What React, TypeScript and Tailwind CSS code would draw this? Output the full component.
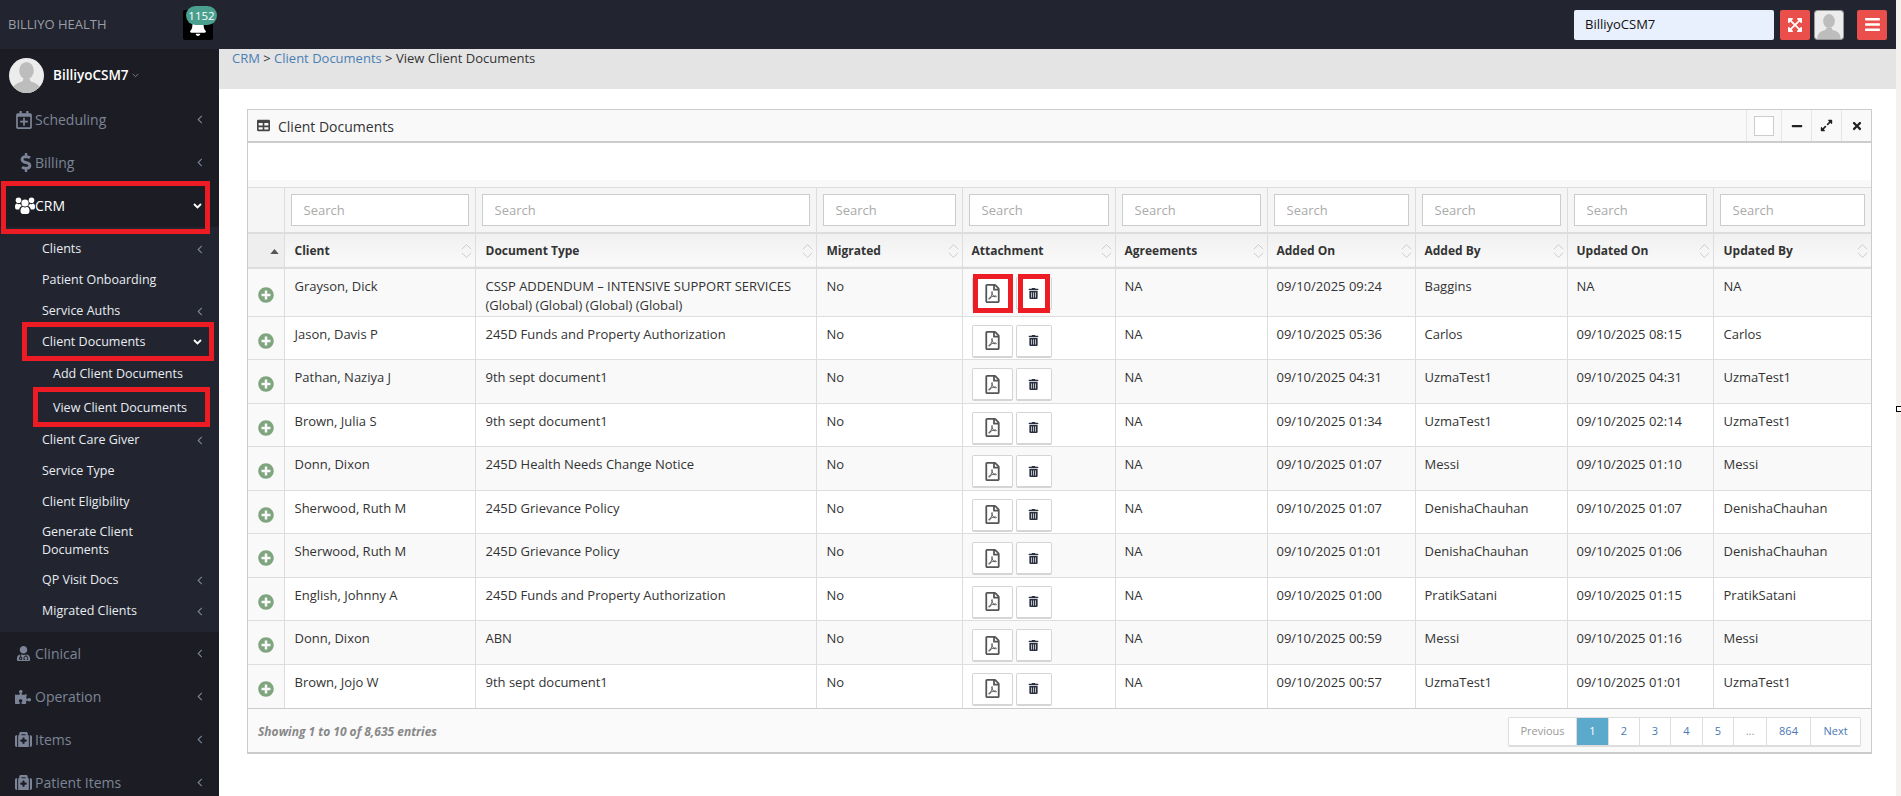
import type { ReactNode } from 'react';
import {
  FaBars, FaBell, FaDollarSign, FaExpandAlt, FaExpandArrowsAlt, FaMedkit, FaMinus,
  FaPlusCircle, FaPuzzlePiece, FaRegCalendarPlus, FaRegFilePdf, FaTable, FaTimes, FaTrashAlt, FaUserMd,
} from 'react-icons/fa';

const COLUMNS = [
  { label: 'Client', width: 'w-[191px]', pad: 'pl-[10px]' },
  { label: 'Document Type', width: 'w-[341px]', pad: 'pl-[10px]' },
  { label: 'Migrated', width: 'w-[146px]', pad: 'pl-[10px]' },
  { label: 'Attachment', width: 'w-[153px]', pad: 'pl-[9px]' },
  { label: 'Agreements', width: 'w-[152px]', pad: 'pl-[9px]' },
  { label: 'Added On', width: 'w-[148px]', pad: 'pl-[9px]' },
  { label: 'Added By', width: 'w-[152px]', pad: 'pl-[9px]' },
  { label: 'Updated On', width: 'w-[146px]', pad: 'pl-[9px]' },
  { label: 'Updated By', width: 'w-[158px]', pad: 'pl-[10px]' },
];

const ROWS = [
  ['Grayson, Dick', 'CSSP ADDENDUM – INTENSIVE SUPPORT SERVICES (Global) (Global) (Global) (Global)', '09/10/2025 09:24', 'Baggins', 'NA', 'NA'],
  ['Jason, Davis P', '245D Funds and Property Authorization', '09/10/2025 05:36', 'Carlos', '09/10/2025 08:15', 'Carlos'],
  ['Pathan, Naziya J', '9th sept document1', '09/10/2025 04:31', 'UzmaTest1', '09/10/2025 04:31', 'UzmaTest1'],
  ['Brown, Julia S', '9th sept document1', '09/10/2025 01:34', 'UzmaTest1', '09/10/2025 02:14', 'UzmaTest1'],
  ['Donn, Dixon', '245D Health Needs Change Notice', '09/10/2025 01:07', 'Messi', '09/10/2025 01:10', 'Messi'],
  ['Sherwood, Ruth M', '245D Grievance Policy', '09/10/2025 01:07', 'DenishaChauhan', '09/10/2025 01:07', 'DenishaChauhan'],
  ['Sherwood, Ruth M', '245D Grievance Policy', '09/10/2025 01:01', 'DenishaChauhan', '09/10/2025 01:06', 'DenishaChauhan'],
  ['English, Johnny A', '245D Funds and Property Authorization', '09/10/2025 01:00', 'PratikSatani', '09/10/2025 01:15', 'PratikSatani'],
  ['Donn, Dixon', 'ABN', '09/10/2025 00:59', 'Messi', '09/10/2025 01:16', 'Messi'],
  ['Brown, Jojo W', '9th sept document1', '09/10/2025 00:57', 'UzmaTest1', '09/10/2025 01:01', 'UzmaTest1'],
];

const PAGES = [
  { label: 'Previous', width: 'w-[68px]', tone: 'text-[#999]' },
  { label: '1', width: 'w-[32px]', tone: 'bg-[#5ba9cb] text-white' },
  { label: '2', width: 'w-[31px]', tone: 'text-[#4a77b4]' },
  { label: '3', width: 'w-[31px]', tone: 'text-[#4a77b4]' },
  { label: '4', width: 'w-[32px]', tone: 'text-[#4a77b4]' },
  { label: '5', width: 'w-[31px]', tone: 'text-[#4a77b4]' },
  { label: '...', width: 'w-[33px]', tone: 'text-[#999]' },
  { label: '864', width: 'w-[44px]', tone: 'text-[#4a77b4]' },
  { label: 'Next', width: 'w-[49px]', tone: 'text-[#4a77b4]' },
];

const CELL = 'pt-[8px] pb-[1.500px] align-top';

function RedBox({ className }: { className: string }) {
  return <div className={`absolute border-[5px] border-[#ed1c24] pointer-events-none ${className}`} />;
}

function Avatar({ className }: { className: string }) {
  return (
    <svg viewBox="0 0 36 36" className={className}>
      <rect width="36" height="36" fill="#ececec" />
      <ellipse cx="18" cy="13" rx="7.5" ry="9" fill="#bdbdbd" />
      <path d="M3 36c0-8 5-10 10-11.500 1-.5 1.500-2 1.500-3h7c0 1 .5 2.500 1.500 3 5 1.500 10 3.500 10 11.500z" fill="#bdbdbd" />
    </svg>
  );
}

function UsersIcon() {
  return (
    <svg viewBox="0 0 20 17" className="w-[20px] h-[17px]" fill="currentColor">
      <circle cx="3.500" cy="3.200" r="2.800" />
      <circle cx="16.500" cy="3.200" r="2.800" />
      <path d="M0 9.500c0-1.800 1-2.900 2-2.900 1 .8 2.100.8 3 .2.400 1 1.100 1.800 2 2.300-1.500.6-2.500 1.800-2.800 3.400H1.500C.5 12.500 0 11.500 0 9.500z" />
      <path d="M20 9.500c0-1.800-1-2.900-2-2.900-1 .8-2.100.8-3 .2-.4 1-1.100 1.800-2 2.300 1.500.6 2.500 1.800 2.800 3.400h2.700c1 0 1.500-1 1.500-3z" />
      <circle cx="10" cy="6" r="3.600" />
      <path d="M5.500 14c0-2.500 1-4 2.500-4.200.5.5 1.200.8 2 .8s1.500-.3 2-.8c1.500.2 2.500 1.700 2.500 4.200 0 1.800-1 3-2.500 3H8c-1.500 0-2.500-1.200-2.500-3z" />
    </svg>
  );
}

function ChevronLeft() {
  return (
    <svg viewBox="0 0 6 10" className="w-[6px] h-[9px] mr-[1px]" fill="none" stroke="#7c8597" strokeWidth="1.200">
      <path d="M5 1L1 5l4 4" />
    </svg>
  );
}

function ChevronDown() {
  return (
    <svg viewBox="0 0 9 6" className="w-[9px] h-[6px] mr-[2px]" fill="none" stroke="#ffffff" strokeWidth="1.800">
      <path d="M1 1l3.500 3.500L8 1" />
    </svg>
  );
}

function MainItem({ icon, label, active }: { icon: ReactNode; label: string; active?: boolean }) {
  return (
    <div className={`relative flex items-center h-[43px] pl-[15px] pr-[15px] ${active ? 'text-white' : 'text-[#7c8597]'}`}>
      <span className="flex w-[20px] shrink-0 items-center text-[17px]">{icon}</span>
      <span className={`text-[14px] flex-1 ${active ? 'font-medium' : ''}`}>{label}</span>
      {active ? <ChevronDown /> : <ChevronLeft />}
    </div>
  );
}

function SubItem({ label, arrow, open, wrap, height = 'h-[31px]', indent = 'pl-[42px]', children }: {
  label: string; arrow?: boolean; open?: boolean; wrap?: boolean; height?: string; indent?: string; children?: ReactNode;
}) {
  return (
    <div className={`relative flex items-center ${height} ${indent} pr-[15px] pt-[1px] text-[12.500px] leading-[18px] text-[#e8ecf2]`}>
      <span className={`flex-1 ${wrap ? 'max-w-[120px]' : ''}`}>{label}</span>
      {arrow && (open ? <ChevronDown /> : <ChevronLeft />)}
      {children}
    </div>
  );
}

function Sidebar() {
  return (
    <aside className="w-[219px] shrink-0 bg-[#1c1d24] overflow-hidden">
      <div className="flex items-center h-[49px] pl-[9px] pt-[4px]">
        <Avatar className="w-[35px] h-[35px] rounded-full" />
        <span className="ml-[9px] text-[13.500px] font-semibold text-white">BilliyoCSM7</span>
        <svg viewBox="0 0 9 6" className="ml-[3px] w-[7px] h-[5px]" fill="none" stroke="#7c8597" strokeWidth="1.200">
          <path d="M1 1l3.500 3.500L8 1" />
        </svg>
      </div>
      <MainItem icon={<FaRegCalendarPlus className="text-[18px]" />} label="Scheduling" />
      <MainItem icon={<FaDollarSign className="ml-[2px] text-[19px]" />} label="Billing" />
      <div className="relative">
        <MainItem icon={<UsersIcon />} label="CRM" active />
        <RedBox className="left-[1px] top-[-3px] w-[209px] h-[53px]" />
      </div>
      <div className="bg-[#22252f] pt-[6px] pb-[6px]">
        <SubItem label="Clients" arrow />
        <SubItem label="Patient Onboarding" />
        <SubItem label="Service Auths" arrow />
        <SubItem label="Client Documents" arrow open>
          <RedBox className="left-[22px] top-[-4px] w-[192px] h-[39px]" />
        </SubItem>
        <SubItem label="Add Client Documents" indent="pl-[53px]" height="h-[33px]" />
        <SubItem label="View Client Documents" indent="pl-[53px]" height="h-[34px]">
          <RedBox className="left-[33px] top-[-3px] w-[177px] h-[40px]" />
        </SubItem>
        <SubItem label="Client Care Giver" arrow />
        <SubItem label="Service Type" />
        <SubItem label="Client Eligibility" />
        <SubItem label="Generate Client Documents" height="h-[47px]" wrap />
        <SubItem label="QP Visit Docs" arrow />
        <SubItem label="Migrated Clients" arrow />
      </div>
      <MainItem icon={<FaUserMd className="text-[15px] ml-[1px]" />} label="Clinical" />
      <MainItem icon={<FaPuzzlePiece className="text-[16px]" />} label="Operation" />
      <MainItem icon={<FaMedkit />} label="Items" />
      <MainItem icon={<FaMedkit />} label="Patient Items" />
    </aside>
  );
}

function TopBar() {
  return (
    <header className="flex items-center h-[49px] bg-[#22252f]">
      <div className="w-[183px] shrink-0 pl-[8px] text-[13px] text-[#9a9ea8]">BILLIYO HEALTH</div>
      <div className="relative flex items-end justify-center w-[30px] h-[30px] rounded-[2px] bg-black">
        <FaBell className="text-[18px] text-white mb-[4px]" />
        <span className="absolute left-[3px] top-[-4px] w-[31px] h-[19px] rounded-full bg-[#4a9f8f] text-center text-[11.500px] leading-[19px] text-white">1152</span>
      </div>
      <div className="ml-auto flex items-center pr-[9px]">
        <div className="flex items-center w-[200px] h-[30px] rounded-[2px] bg-[#e8f0fe] pl-[11px] text-[13px] text-[#111]">BilliyoCSM7</div>
        <div className="ml-[6px] flex items-center justify-center w-[30px] h-[30px] rounded-[2px] bg-[#ea4f4b] text-white text-[16px]"><FaExpandArrowsAlt /></div>
        <Avatar className="ml-[4px] w-[30px] h-[30px] rounded-[3px] border border-[#999]" />
        <div className="ml-[13px] flex items-center justify-center w-[30px] h-[30px] rounded-[2px] bg-[#ea4f4b] text-white text-[17px]"><FaBars /></div>
      </div>
    </header>
  );
}

function SortIcon() {
  return (
    <svg viewBox="0 0 12 16" className="absolute right-[3px] top-1/2 w-[11px] h-[15px] -translate-y-1/2" fill="none" stroke="#c8c8c8">
      <path d="M1 6l5-5 5 5M1 10l5 5 5-5" />
    </svg>
  );
}

function AttachmentCell() {
  return (
    <div className="flex gap-[3px]">
      <div className="flex items-center justify-center w-[41px] h-[33px] rounded-[2px] border border-[#d5d5d5] border-b-2 bg-white text-[19px] text-[#555]"><FaRegFilePdf /></div>
      <div className="flex items-center justify-center w-[36px] h-[33px] rounded-[2px] border border-[#d5d5d5] border-b-2 bg-white text-[11px] text-[#2b3040]"><FaTrashAlt /></div>
    </div>
  );
}

function DocumentsTable() {
  return (
    <table className="w-full table-fixed border-collapse text-[13px] leading-[18.500px] text-[#333]">
      <colgroup>
        <col className="w-[36px]" />
        {COLUMNS.map((c) => <col key={c.label} className={c.width} />)}
      </colgroup>
      <thead>
        <tr className="h-[45px] bg-[#f5f5f5] border-b-2 border-[#ddd]">
          <th className="border-r border-[#ddd]" />
          {COLUMNS.map((c) => (
            <th key={c.label} className="px-[6px] border-r last:border-r-0 border-[#ddd]">
              <input
                readOnly
                placeholder="Search"
                className="block w-full h-[32px] border border-[#ccc] bg-white pl-[12px] text-[13px] font-normal placeholder:text-[#aaa]"
              />
            </th>
          ))}
        </tr>
        <tr className="h-[35px] bg-gradient-to-b from-[#f0f0f0] to-[#fafafa] border-b-2 border-[#ddd]">
          <th className="relative border-r border-[#ddd] bg-[#eeeeee]">
            <svg viewBox="0 0 10 6" className="absolute right-[5px] top-[15px] w-[9px] h-[5px]" fill="#555"><path d="M5 0l5 6H0z" /></svg>
          </th>
          {COLUMNS.map((c) => (
            <th key={c.label} className={`relative ${c.pad} pt-[1px] text-left text-[12px] font-bold text-[#333] border-r last:border-r-0 border-[#ddd]`}>
              {c.label}
              <SortIcon />
            </th>
          ))}
        </tr>
      </thead>
      <tbody>
        {ROWS.map((r, i) => (
          <tr key={i} className={`h-[43.500px] border-b border-[#ddd] last:border-b-0 ${i % 2 === 0 ? 'bg-[#f9f9f9]' : 'bg-white'}`}>
            <td className="border-r border-[#ddd] bg-[#f9f9f9]">
              <FaPlusCircle className="mx-auto mt-[6px] text-[16px] text-[#7ea57e]" />
            </td>
            <td className={`${CELL} pl-[10px] pr-[9px] border-r border-[#ddd]`}>{r[0]}</td>
            <td className={`${CELL} pl-[10px] pr-[9px] border-r border-[#ddd]`}>{r[1]}</td>
            <td className={`${CELL} pl-[10px] pr-[9px] border-r border-[#ddd]`}>No</td>
            <td className={`${CELL} relative pl-[9px] border-r border-[#ddd]`}>
              <AttachmentCell />
              {i === 0 && (
                <>
                  <RedBox className="left-[10px] top-[5px] w-[40px] h-[39px]" />
                  <RedBox className="left-[55px] top-[5px] w-[32px] h-[39px]" />
                </>
              )}
            </td>
            <td className={`${CELL} pl-[9px] border-r border-[#ddd]`}>NA</td>
            <td className={`${CELL} pl-[9px] border-r border-[#ddd]`}>{r[2]}</td>
            <td className={`${CELL} pl-[9px] border-r border-[#ddd]`}>{r[3]}</td>
            <td className={`${CELL} pl-[9px] border-r border-[#ddd]`}>{r[4]}</td>
            <td className={`${CELL} pl-[10px]`}>{r[5]}</td>
          </tr>
        ))}
      </tbody>
    </table>
  );
}

function Panel() {
  return (
    <section className="border border-[#ccc] border-b-2 bg-white">
      <div className="flex items-center h-[33px] bg-[#f9f9f9] border-b-2 border-[#ccc]">
        <FaTable className="ml-[9px] text-[13px] text-[#444]" />
        <span className="ml-[8px] pt-[1px] text-[14px] text-[#333]">Client Documents</span>
        <div className="ml-auto flex h-full">
          <div className="flex items-center justify-center w-[35px] border-l border-[#e6e6e6]">
            <div className="w-[20px] h-[20px] border border-[#ccc] bg-white" />
          </div>
          <div className="flex items-center justify-center w-[30px] border-l border-[#e6e6e6] text-[12px] text-[#222]"><FaMinus /></div>
          <div className="flex items-center justify-center w-[30px] border-l border-[#e6e6e6] text-[13px] text-[#222]"><FaExpandAlt /></div>
          <div className="flex items-center justify-center w-[30px] border-l border-[#e6e6e6] text-[12px] text-[#222]"><FaTimes /></div>
        </div>
      </div>
      <div className="h-[45px] bg-white border-b border-[#ddd]">
        <div className="h-[37px]" />
        <div className="h-[7px] bg-[#f9f9f9]" />
      </div>
      <DocumentsTable />
      <div className="flex items-center justify-between h-[44px] bg-[#fafafa] border-t border-[#ccc] pl-[10px] pr-[10px] pt-[4px]">
        <span className="text-[12px] font-bold italic text-[#888]">Showing 1 to 10 of 8,635 entries</span>
        <div className="flex h-[30px] rounded-[2px] border border-[#ddd] border-b-2 bg-white text-[11px]">
          {PAGES.map((p) => (
            <span key={p.label} className={`flex items-center justify-center border-r last:border-r-0 border-[#ddd] ${p.width} ${p.tone}`}>{p.label}</span>
          ))}
        </div>
      </div>
    </section>
  );
}

export default function App() {
  return (
    <div className="relative flex h-[796px] w-[1901px] overflow-hidden bg-[#f5f1ef] font-['Open_Sans',sans-serif]">
      <div className="w-[1896px] shrink-0 bg-white">
        <TopBar />
        <div className="flex h-[747px]">
          <Sidebar />
          <main className="flex-1 min-w-0">
            <div className="h-[40px] bg-[#e4e4e4] pl-[13px] text-[13px] leading-[18px] text-[#333]">
              <span className="text-[#4a7fb5]">CRM</span> &gt; <span className="text-[#4a7fb5]">Client Documents</span> &gt; View Client Documents
            </div>
            <div className="pl-[28px] pr-[24px] pt-[20px]">
              <Panel />
            </div>
          </main>
        </div>
      </div>
      <div className="absolute left-[1896px] top-[406px] w-[8px] h-[6px] border border-black bg-white" />
    </div>
  );
}
